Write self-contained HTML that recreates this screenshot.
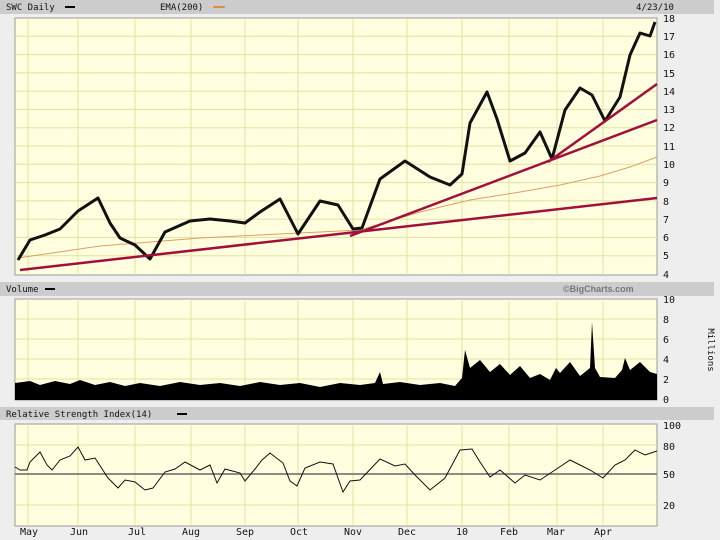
<!DOCTYPE html><html><head><style>
body{margin:0;background:#fff;}
svg{display:block;font-family:"DejaVu Sans Mono","Liberation Mono",monospace;}
</style></head><body>
<svg width="720" height="540" viewBox="0 0 720 540" xmlns="http://www.w3.org/2000/svg">
<rect width="720" height="540" fill="#eeeeee"/>
<rect x="0" y="0" width="714" height="14" fill="#cccccc"/>
<rect x="0" y="282" width="714" height="14" fill="#cccccc"/>
<rect x="0" y="407" width="714" height="13" fill="#cccccc"/>
<g font-size="9" fill="#111">
<text x="6" y="10">SWC Daily</text><rect x="65" y="6" width="10" height="2" fill="#000"/>
<text x="160" y="10">EMA(200)</text><rect x="213" y="6" width="12" height="2" rx="1" fill="#d9903c"/>
<text x="636" y="10">4/23/10</text>
<text x="6" y="292">Volume</text><rect x="45" y="288" width="10" height="2" fill="#000"/>
<text x="563" y="292" fill="#777" font-weight="bold" font-family="Liberation Sans,sans-serif">©BigCharts.com</text>
<text x="6" y="417">Relative Strength Index(14)</text><rect x="177" y="413" width="10" height="2" fill="#000"/>
</g>
<rect x="15" y="18" width="642" height="257" fill="#ffffe0" stroke="#999" />
<rect x="15" y="299" width="642" height="101" fill="#ffffe0" stroke="#999"/>
<rect x="15" y="424" width="642" height="102" fill="#ffffe0" stroke="#999"/>
<g stroke="#e0e0a0" stroke-width="1">
<path d="M28 18V275M78 18V275M135 18V275M191 18V275M245 18V275M298 18V275M353 18V275M407 18V275M462 18V275M509 18V275M557 18V275M603 18V275"/>
<path d="M28 299V400M78 299V400M135 299V400M191 299V400M245 299V400M298 299V400M353 299V400M407 299V400M462 299V400M509 299V400M557 299V400M603 299V400"/>
<path d="M28 424V526M78 424V526M135 424V526M191 424V526M245 424V526M298 424V526M353 424V526M407 424V526M462 424V526M509 424V526M557 424V526M603 424V526"/>
<path d="M15 36.3H657M15 54.6H657M15 72.9H657M15 91.2H657M15 109.4H657M15 127.7H657M15 146H657M15 164.3H657M15 182.6H657M15 200.9H657M15 219.2H657M15 237.4H657M15 255.7H657"/>
<path d="M15 319H657M15 339H657M15 359H657M15 379H657"/>
<path d="M15 445H657M15 505H657"/>
</g>
<line x1="15" y1="474" x2="657" y2="474" stroke="#666" stroke-width="1.5"/>
<g font-size="10" fill="#111">
<text x="663" y="22">18</text><text x="663" y="40">17</text><text x="663" y="58">16</text><text x="663" y="77">15</text><text x="663" y="95">14</text><text x="663" y="113">13</text><text x="663" y="131">12</text><text x="663" y="150">11</text><text x="663" y="168">10</text><text x="663" y="186">9</text><text x="663" y="205">8</text><text x="663" y="223">7</text><text x="663" y="241">6</text><text x="663" y="259">5</text><text x="663" y="278">4</text>
<text x="663" y="303">10</text><text x="663" y="323">8</text><text x="663" y="343">6</text><text x="663" y="363">4</text><text x="663" y="383">2</text><text x="663" y="403">0</text>
<text x="663" y="429">100</text><text x="663" y="450">80</text><text x="663" y="478">50</text><text x="663" y="509">20</text>
<text transform="translate(708,350) rotate(90)" font-size="9" text-anchor="middle">Millions</text>
<text x="20" y="535">May</text><text x="70" y="535">Jun</text><text x="128" y="535">Jul</text><text x="182" y="535">Aug</text><text x="236" y="535">Sep</text><text x="290" y="535">Oct</text><text x="344" y="535">Nov</text><text x="398" y="535">Dec</text><text x="456" y="535">10</text><text x="500" y="535">Feb</text><text x="547" y="535">Mar</text><text x="594" y="535">Apr</text>
</g>
<polyline fill="none" stroke="#d9a060" stroke-width="1" points="18,258 100,246 200,238 300,233 360,230 420,212 470,200 520,192 560,185 600,176 630,167 657,157"/>
<polyline fill="none" stroke="#111" stroke-width="3" stroke-linejoin="round" points="18,260 30,240 45,235 60,229 78,211 98,198 110,223 120,238 135,245 150,259 165,232 190,221 210,219 230,221 245,223 260,212 280,199 298,234 320,201 338,205 353,229 362,228 380,179 405,161 430,177 450,185 462,174 470,123 487,92 497,119 510,161 525,153 540,132 552,159 565,110 580,88 592,95 605,121 620,97 630,55 640,33 650,36 655,22"/>
<g stroke="#a0103a" stroke-width="2.5">
<line x1="20" y1="270" x2="657" y2="198"/>
<line x1="350" y1="236" x2="657" y2="120"/>
<line x1="548" y1="162" x2="657" y2="84"/>
</g>
<polygon fill="#000" points="15,400 15,383 30,381 40,385 55,381 70,384 80,380 95,385 110,382 125,386 140,383 160,386 180,382 200,385 220,383 240,386 260,382 280,385 300,383 320,387 340,383 360,385 375,383 380,372 383,384 400,382 420,385 440,383 455,386 462,378 465,350 470,368 480,360 490,372 500,364 510,375 520,366 530,378 540,374 550,380 556,368 560,373 570,362 580,376 590,368 592,322 595,368 600,377 615,378 622,370 625,358 630,370 640,362 650,372 657,374 657,400"/>
<polyline fill="none" stroke="#111" stroke-width="1" points="15,467 20,470 27,470 30,462 40,452 47,465 52,470 60,460 70,456 78,447 85,460 95,458 108,478 118,488 125,480 135,482 145,490 153,488 165,472 175,469 185,462 200,470 210,465 217,483 225,469 240,473 245,481 255,469 262,460 270,453 283,463 290,481 297,486 305,468 320,462 333,464 343,492 350,481 360,480 380,459 395,466 405,464 415,475 430,490 445,478 460,450 472,449 480,462 490,477 500,470 515,483 525,475 540,480 555,470 570,460 580,465 590,470 603,478 615,465 625,460 635,450 645,455 657,451"/>
</svg>
</body></html>
